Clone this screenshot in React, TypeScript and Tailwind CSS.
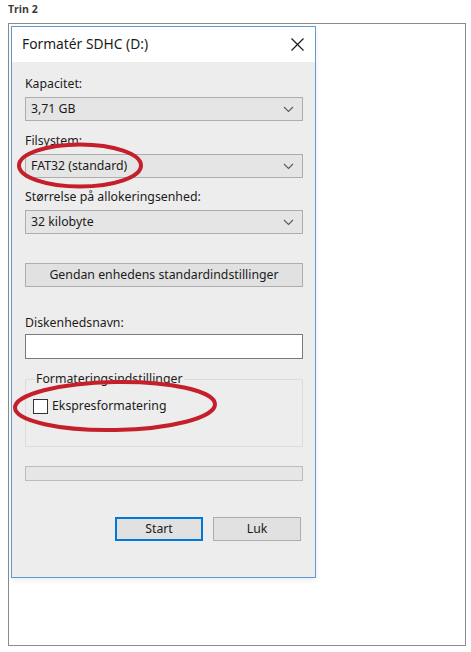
const ui = { fontFamily: '"Noto Sans", "Open Sans", sans-serif' };

const Chevron = () => (
  <svg width="11" height="7" viewBox="0 0 11 7" className="shrink-0">
    <path d="M1 1 L5.5 5.5 L10 1" fill="none" stroke="#5a5a5a" strokeWidth="1.1" />
  </svg>
);

const Combo = ({ value }: { value: string }) => (
  <div className="h-[24px] flex items-center justify-between bg-[#e5e5e5] border border-[#adadad] pl-[5px] pr-[8px]">
    <span className="text-[12.3px] leading-none text-[#1b1b1b]">{value}</span>
    <Chevron />
  </div>
);

const Label = ({ children, className = "" }: { children: React.ReactNode; className?: string }) => (
  <div className={`h-[16px] leading-[16px] text-[12.3px] text-[#1b1b1b] ${className}`}>{children}</div>
);

export default function App() {
  return (
    <div className="relative w-[471px] h-[652px] bg-white overflow-hidden" style={ui}>
      <div className="pl-[8px] pt-[3px] h-[23px] text-[10.5px] leading-[12px] font-bold text-[#3a3a3a]" style={{ fontFamily: '"Open Sans", sans-serif' }}>
        Trin 2
      </div>

      <div className="ml-[8px] w-[458px] h-[623px] border border-[#8c8c8c] pl-[2px] pt-[2px]">
        {/* dialog */}
        <div className="w-[305px] h-[552px] border border-[#5c9ad6] bg-[#ededed] flex flex-col shadow-[0_2px_6px_rgba(0,0,0,0.08)]">
          <div className="h-[35px] bg-white flex items-center justify-between pl-[10px] pr-[11px]">
            <span className="text-[13.8px] text-[#1b1b1b]">Formatér SDHC (D:)</span>
            <svg width="13" height="13" viewBox="0 0 13 13">
              <path d="M0.5 0.5 L12.5 12.5 M12.5 0.5 L0.5 12.5" stroke="#1b1b1b" strokeWidth="1.2" />
            </svg>
          </div>

          <div className="flex flex-col pl-[13px] pr-[12px] pt-[14px]">
            <Label className="mb-[5px]">Kapacitet:</Label>
            <Combo value="3,71 GB" />
            <Label className="mt-[12px] mb-[5px]">Filsystem:</Label>
            <Combo value="FAT32 (standard)" />
            <Label className="mt-[11px] mb-[5px]">Størrelse på allokeringsenhed:</Label>
            <Combo value="32 kilobyte" />

            <div className="mt-[29px] h-[24px] flex items-center justify-center bg-[#e1e1e1] border border-[#adadad] text-[12.3px] text-[#1b1b1b]">
              Gendan enhedens standardindstillinger
            </div>

            <Label className="mt-[28px] mb-[3px]">Diskenhedsnavn:</Label>
            <div className="h-[25px] bg-white border border-[#7a7a7a]" />

            <div className="relative mt-[20px] h-[68px] border border-[#dcdcdc]">
              <span className="absolute left-[9px] top-[-9px] px-[1px] bg-[#ededed] text-[12.3px] leading-[16px] text-[#1b1b1b]">
                Formateringsindstillinger
              </span>
              <div className="flex items-center gap-[4px] pl-[7px] pt-[18px]">
                <div className="w-[15px] h-[15px] bg-white border border-[#333333]" />
                <span className="text-[12.3px] leading-[16px] text-[#1b1b1b]">Ekspresformatering</span>
              </div>
            </div>

            <div className="mt-[19px] h-[15px] bg-[#e6e6e6] border border-[#bcbcbc]" />

            <div className="mt-[36px] flex justify-end gap-[10px] pr-[2px]">
              <div className="w-[88px] h-[24px] flex items-center justify-center bg-[#e1e1e1] border-2 border-[#0078d7] text-[12.3px] text-[#1b1b1b]">
                Start
              </div>
              <div className="w-[88px] h-[24px] flex items-center justify-center bg-[#e1e1e1] border border-[#adadad] text-[12.3px] text-[#1b1b1b]">
                Luk
              </div>
            </div>
          </div>
        </div>
      </div>

      {/* red annotation circles */}
      <svg className="absolute inset-0 pointer-events-none" width="471" height="652" viewBox="0 0 471 652">
        <ellipse cx="80" cy="165.5" rx="61" ry="21" fill="none" stroke="#c41f2a" strokeWidth="4" />
        <ellipse cx="115" cy="406" rx="100" ry="24" fill="none" stroke="#c41f2a" strokeWidth="4" transform="rotate(-1 115 406)" />
      </svg>
    </div>
  );
}
